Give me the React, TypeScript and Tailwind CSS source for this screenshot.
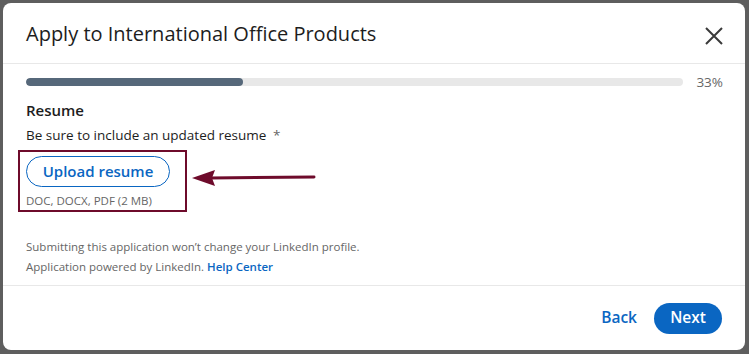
function Arrow() {
  return (
    <svg width="124" height="20" viewBox="0 0 124 20" className="shrink-0">
      <line x1="18" y1="10" x2="122" y2="9" stroke="#6e0b2b" strokeWidth="3" strokeLinecap="round" />
      <polygon points="0,10 23,2 20,10 23,18" fill="#6e0b2b" />
    </svg>
  )
}

function CloseIcon() {
  return (
    <svg width="18" height="18" viewBox="0 0 18 18" className="text-[#3a3a3a]">
      <path d="M1 1 17 17M17 1 1 17" stroke="currentColor" strokeWidth="2" fill="none" />
    </svg>
  )
}

export default function App() {
  return (
    <div
      className="w-[749px] h-[354px] bg-[#5e5e5e] pt-[3px] pl-[3px] overflow-hidden"
      style={{ fontFamily: '"Open Sans", "Noto Sans", sans-serif' }}
    >
      <div className="w-[742px] h-[347px] bg-white rounded-[8px] flex flex-col">
        <div className="h-[61px] shrink-0 flex items-center justify-between pl-[23px] pr-[22px] border-b border-[#e8e8e8]">
          <h2 className="text-[20px] text-[#1d1d1d] pt-[2px]">Apply to International Office Products</h2>
          <div className="mt-[6px]">
            <CloseIcon />
          </div>
        </div>

        <div className="flex-1 pl-[23px] pr-[22px] pt-[14px]">
          <div className="flex items-center gap-[13px] h-[8px]">
            <div className="flex-1 h-[8px] rounded-full bg-[#e8e8e8] overflow-hidden">
              <div className="h-full w-[33%] bg-[#56687a] rounded-full" />
            </div>
            <span className="text-[13.5px] text-[#666]">33%</span>
          </div>

          <h3 className="mt-[12px] text-[15px] leading-[24px] font-semibold text-[#1d1d1d]">Resume</h3>
          <p className="mt-[3px] text-[13.5px] leading-[20px] text-[#1d1d1d]">
            Be sure to include an updated resume <span className="ml-[3px] text-[#666]">*</span>
          </p>

          <div className="flex items-center mt-[5px] -ml-[8px]">
            <div className="border-2 border-[#6e0b2b] pt-[4px] pb-[1px] pl-[6px] pr-[15px]">
              <button className="h-[31px] w-[144px] rounded-full border border-[#0a66c2] text-[#0a66c2] text-[15px] font-semibold">
                Upload resume
              </button>
              <div className="mt-[6px] text-[11.5px] leading-[16px] text-[#666]">DOC, DOCX, PDF (2 MB)</div>
            </div>
            <div className="ml-[5px] -mt-[6px]">
              <Arrow />
            </div>
          </div>

          <p className="mt-[25px] text-[11.5px] text-[#666] leading-[20px]">
            Submitting this application won’t change your LinkedIn profile.
            <br />
            Application powered by LinkedIn. <span className="font-semibold text-[#0a66c2]">Help Center</span>
          </p>
        </div>

        <div className="h-[65px] shrink-0 border-t border-[#e8e8e8] flex items-center justify-end gap-[17px] pr-[23px]">
          <button className="text-[15.5px] font-semibold text-[#0a66c2]">Back</button>
          <button className="h-[31px] w-[68px] rounded-full bg-[#0a66c2] text-white text-[15.5px] font-semibold">
            Next
          </button>
        </div>
      </div>
    </div>
  )
}
